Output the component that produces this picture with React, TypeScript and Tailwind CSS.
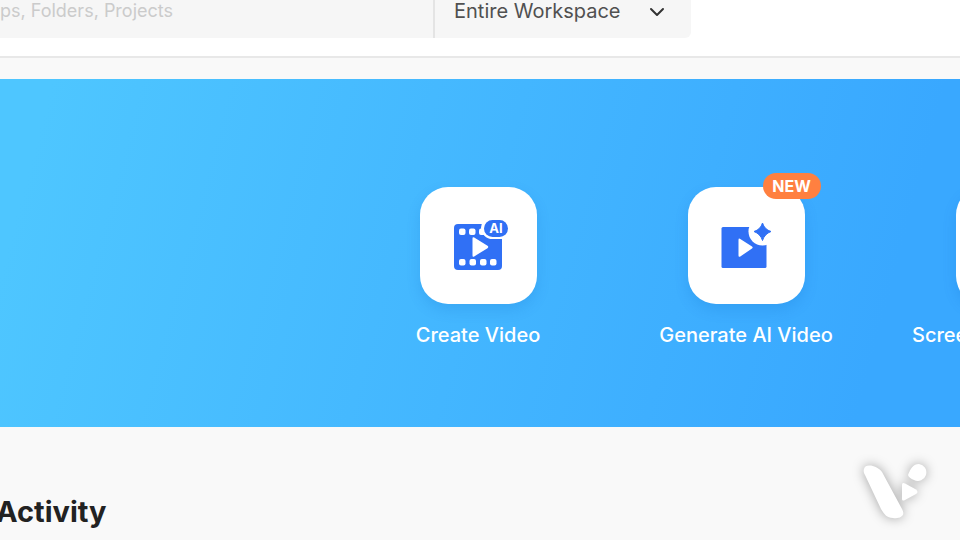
import type { ReactNode } from "react";
import { ChevronDown } from "lucide-react";

type Action = {
  label: string;
  icon: ReactNode;
  isNew?: boolean;
  alignLeft?: boolean;
};

function FilmIcon() {
  return (
    <svg viewBox="0 0 60 52" className="h-[52px] w-[60px]" aria-hidden="true">
      <rect x="6" y="4" width="48" height="46" rx="4" fill="#3070f5" />
      {[11, 21, 31].map((x) => (
        <rect key={x} x={x} y="8.500" width="6.500" height="6.500" rx="2" fill="white" />
      ))}
      {[11, 21.500, 32, 42].map((x) => (
        <rect key={x} x={x} y="39" width="6.500" height="6.500" rx="2" fill="white" />
      ))}
      <path d="M24.500 18.500 Q24.500 16.500 26.200 17.600 L39.500 25.800 Q41 27 39.500 28.200 L26.200 36.400 Q24.500 37.400 24.500 35.400 Z" fill="white" />
      <rect x="33" y="-4" width="32" height="23" rx="11.500" fill="white" />
      <rect x="36" y="0" width="24" height="17" rx="8.500" fill="#3070f5" />
      <text x="48" y="13" textAnchor="middle" fontFamily="Inter, sans-serif" fontSize="13" fontWeight="700" fill="white">
        AI
      </text>
    </svg>
  );
}

function SparkleVideoIcon() {
  return (
    <svg viewBox="0 0 60 52" className="h-[52px] w-[60px]" aria-hidden="true">
      <rect x="5.500" y="7" width="45" height="41" rx="1.500" fill="#3070f5" />
      <path d="M22.500 20 Q22.500 17.800 24.300 19 L36 26.500 Q37.300 27.500 36 28.500 L24.300 36.500 Q22.500 37.500 22.500 35.500 Z" fill="white" />
      <circle cx="46.500" cy="11.500" r="14" fill="white" />
      <path d="M46.500 3 Q48.500 9.500 55 11.500 Q48.500 14 46.500 20.500 Q44.500 14 38 11.500 Q44.500 9.500 46.500 3 Z" fill="#3070f5" stroke="#3070f5" strokeLinejoin="round" />
    </svg>
  );
}

const actions: Action[] = [
  { label: "Create Video", icon: <FilmIcon /> },
  { label: "Generate AI Video", icon: <SparkleVideoIcon />, isNew: true },
  { label: "Scree", icon: null, alignLeft: true },
];

function ActionCard({ label, icon, isNew, alignLeft }: Action) {
  return (
    <button type="button" className="flex w-[268px] shrink-0 flex-col items-center px-8">
      <span className="relative flex size-[117px] items-center justify-center rounded-[28px] bg-white shadow-[0_6px_14px_rgba(0,90,180,0.15)]">
        {icon}
        {isNew && (
          <span className="absolute -top-[14px] -right-4 flex h-[26px] w-[58px] items-center justify-center rounded-full bg-[#ff8040] text-base font-bold text-white">
            NEW
          </span>
        )}
      </span>
      <span
        className={
          alignLeft
            ? "mt-[15px] w-full text-left text-xl leading-8 font-medium whitespace-nowrap text-white"
            : "mt-[15px] text-xl leading-8 font-medium whitespace-nowrap text-white"
        }
      >
        {label}
      </span>
    </button>
  );
}

function Watermark() {
  return (
    <svg
      viewBox="0 0 80 70"
      className="absolute right-6 bottom-3 h-[70px] w-20 drop-shadow-[0_0_6px_rgba(0,0,0,0.35)]"
      aria-hidden="true"
    >
      <path d="M8 11 C9 5 21 7 26 14 L46 51 C50 58 44 61 37 60 C31 60 28 56 25 51 L9 17 Q7 14 8 11 Z" fill="white" />
      <path d="M52 17 C55 10 57 6 63 6 A8.500 8.500 0 1 1 58 22 Q53 20 52 17 Z" fill="white" />
      <path d="M46 27 Q46 24 49 25.500 L60 31.500 Q63 34 60 36 L49 42 Q46 43.500 46 41 Z" fill="white" />
    </svg>
  );
}

export default function App() {
  return (
    <div className="relative min-h-screen overflow-hidden bg-[#f9f9f9] font-['Inter',sans-serif]">
      <header className="border-b-2 border-[#e8e8e8] bg-white pr-[269px] pb-[18px]">
        <div className="flex h-[38px] rounded-br-md bg-[#f6f6f6]">
          <input
            type="search"
            aria-label="Search"
            placeholder="ps, Folders, Projects"
            className="min-w-0 flex-1 pb-4 text-lg text-[#555555] outline-none placeholder:text-[#cbcbcb]"
          />
          <div className="relative w-[258px] border-l-2 border-[#e4e4e4]">
            <select
              aria-label="Search scope"
              className="block h-[22px] w-full appearance-none pl-[19px] text-xl leading-[22px] text-[#505050] outline-none"
            >
              <option>Entire Workspace</option>
            </select>
            <ChevronDown className="pointer-events-none absolute top-0 right-[22px] size-6 text-[#333333]" />
          </div>
        </div>
      </header>

      <main className="pt-[21px]">
        <section className="flex h-[348px] overflow-hidden bg-[linear-gradient(105deg,#4ec6ff_5%,#43b6ff_50%,#39a8ff_90%)] pt-[108px] pl-[344px]">
          {actions.map((action) => (
            <ActionCard key={action.label} {...action} />
          ))}
        </section>

        <h2 className="-ml-1 pt-[65px] text-[29px] leading-10 font-bold text-[#222222]">Activity</h2>
      </main>

      <Watermark />
    </div>
  );
}
